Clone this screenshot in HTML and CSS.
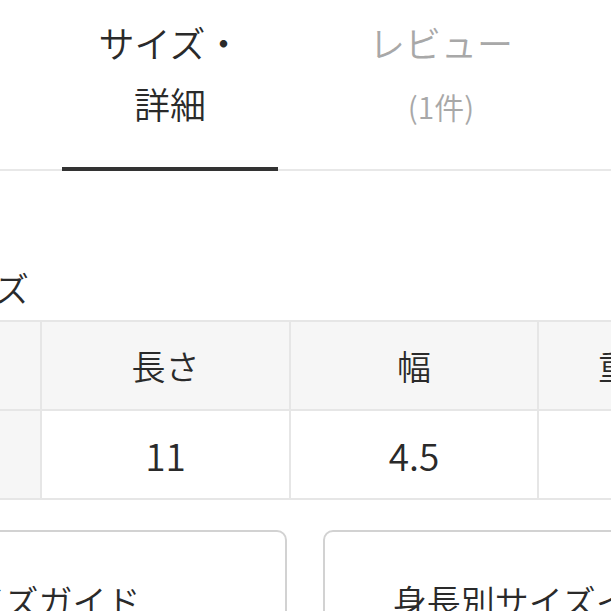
FILE: index.html
```html
<!DOCTYPE html>
<html lang="ja">
<head>
<meta charset="utf-8">
<link rel="stylesheet" href="styles.css">
</head>
<body>
<nav class="tabs">
  <div class="tab tab-active">サイズ・<br>詳細</div>
  <div class="tab">レビュー<br><span class="tab-count">(1件)</span></div>
</nav>
<main class="content">
  <h2 class="heading">サイズ</h2>
  <table class="size-table">
    <colgroup>
      <col class="col-a"><col class="col-b"><col class="col-c"><col class="col-d">
    </colgroup>
    <tr class="row-head">
      <th class="cell-label">サイズ</th>
      <th>長さ</th>
      <th>幅</th>
      <th>重さ</th>
    </tr>
    <tr class="row-body">
      <th class="cell-label">F</th>
      <td>11</td>
      <td>4.5</td>
      <td>-</td>
    </tr>
  </table>
  <div class="buttons">
    <div class="btn">サイズガイド</div>
    <div class="btn">身長別サイズイメージ</div>
  </div>
</main>
</body>
</html>
```

FILE: styles.css
```css
html, body {
  margin: 0;
  padding: 0;
  background: #fff;
}
body {
  width: 611px;
  height: 611px;
  overflow: hidden;
  font-family: "Noto Sans CJK JP", "Noto Sans", sans-serif;
  font-weight: 350;
  color: #2a2a2a;
}
.tabs {
  display: flex;
  gap: 55px;
  padding: 12px 0 0 62px;
  border-bottom: 2px solid #e8e8e8;
  width: 1000px;
}
.tab {
  width: 216px;
  text-align: center;
  font-size: 36px;
  line-height: 61px;
  padding-bottom: 30px;
  color: #a8a8a8;
  margin-bottom: -2px;
  border-bottom: 4px solid transparent;
}
.tab-active {
  color: #2a2a2a;
  border-bottom-color: #333;
}
.tab-count {
  font-size: 30px;
}
.content {
  margin-left: -209px;
  width: 1300px;
}
.heading {
  margin: 0;
  padding: 92px 0 7px 137px;
  font-size: 34px;
  line-height: 50px;
  font-weight: 350;
}
.size-table {
  border-collapse: collapse;
  table-layout: fixed;
  width: 934px;
}
.col-a { width: 249px; }
.col-b { width: 249px; }
.col-c { width: 248px; }
.col-d { width: 188px; }
.size-table th,
.size-table td {
  border: 2px solid #e6e6e6;
  height: 87px;
  padding: 0;
  text-align: center;
  font-size: 34px;
  font-weight: 350;
}
.row-head th {
  background: #f6f6f6;
}
.row-body .cell-label {
  background: #f6f6f6;
}
.row-body td {
  font-size: 37px;
}
.buttons {
  display: flex;
  gap: 36px;
  margin-top: 30px;
}
.btn {
  width: 492px;
  height: 136px;
  border: 2px solid #d2d2d2;
  border-radius: 10px;
  display: flex;
  align-items: center;
  justify-content: center;
  font-size: 34px;
}
.btn + .btn {
  width: 474px;
}
```
